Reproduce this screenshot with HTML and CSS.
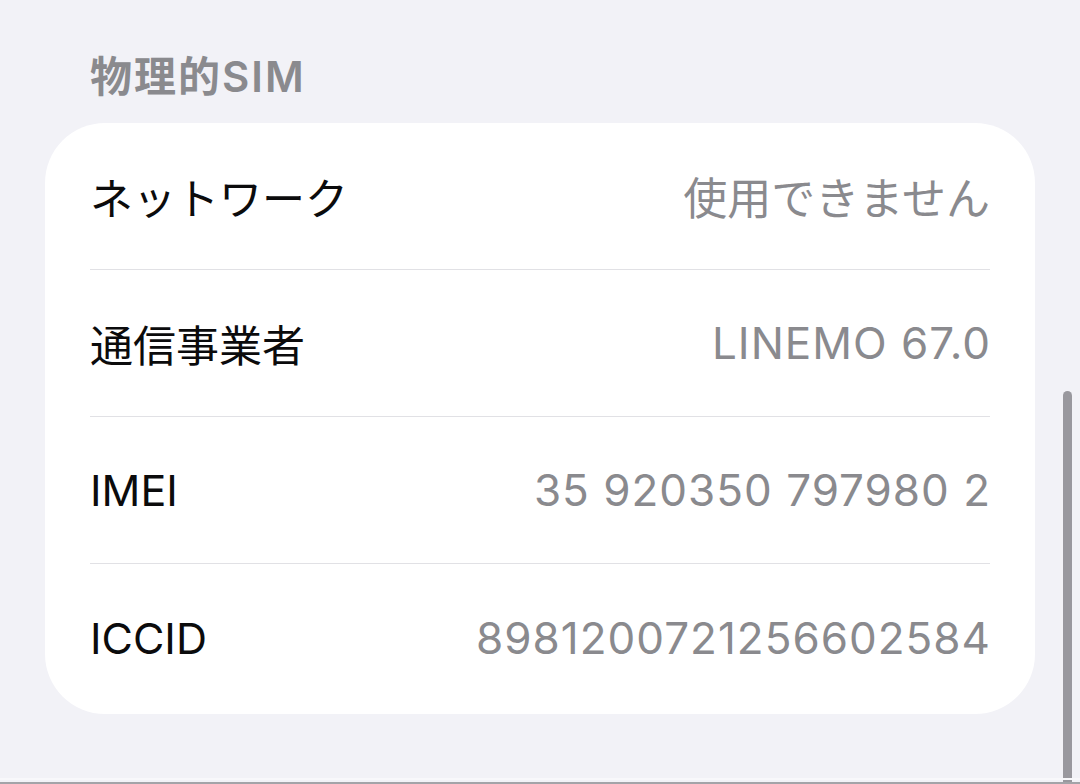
FILE: index.html
```html
<!DOCTYPE html>
<html lang="ja">
<head>
  <meta charset="UTF-8">
  <title>物理的SIM</title>
  <meta name="viewport" content="width=device-width, initial-scale=1.0">
  <link rel="stylesheet" href="styles.css">
</head>
<body>
  <div id="page">
    <h2 class="section-title">物理的SIM</h2>

    <ul class="group">
      <li class="row">
        <span class="label">ネットワーク</span>
        <span class="value">使用できません</span>
      </li>
      <li class="row">
        <span class="label">通信事業者</span>
        <span class="value latin">LINEMO 67.0</span>
      </li>
      <li class="row">
        <span class="label">IMEI</span>
        <span class="value latin">35 920350 797980 2</span>
      </li>
      <li class="row">
        <span class="label">ICCID</span>
        <span class="value latin">8981200721256602584</span>
      </li>
    </ul>
  </div>

  <div id="scroll-indicator"></div>
  <div id="bottom-edge"></div>
</body>
</html>
```

FILE: styles.css
```css
body {
  margin: 0;
  background-color: #f2f2f7;
  color: #0b0b0c;
  font-family: Inter, "Noto Sans CJK JP", sans-serif;
  height: 784px;
  overflow: hidden;
}

#page {
  padding: 52px 45px 0 45px;
}

.section-title {
  margin: 0 0 21px 0;
  padding-left: 45px;
  font-size: 42px;
  line-height: 50px;
  font-weight: 600;
  color: #8a8a8e;
  letter-spacing: 2px;
}

.group {
  list-style: none;
  margin: 0;
  padding: 0 0 2px 0;
  background: #fff;
  border-radius: 60px;
  width: 990px;
}

.row {
  display: flex;
  align-items: center;
  justify-content: space-between;
  height: 146px;
  margin: 0 45px;
  border-bottom: 1.5px solid #e1e1e5;
  font-size: 43px;
}

.row:last-child {
  border-bottom: none;
  height: 148px;
}

.label {
  color: #0b0b0c;
}

.value {
  color: #8a8a8e;
  font-size: 44px;
}

/* numbers and carrier name run a little wider */
.latin {
  letter-spacing: 1px;
  margin-right: -1px;
}

/* scroll thumb on the right edge */
#scroll-indicator {
  position: fixed;
  left: 1063px;
  top: 391px;
  width: 9px;
  height: 400px;
  border-radius: 5px;
  background: #99989e;
}

#bottom-edge {
  position: fixed;
  left: 0;
  right: 0;
  bottom: 0;
  height: 2px;
  background: #a3a3a8;
  box-shadow: 0 -4px 0 #f8f8fb;
}
```
